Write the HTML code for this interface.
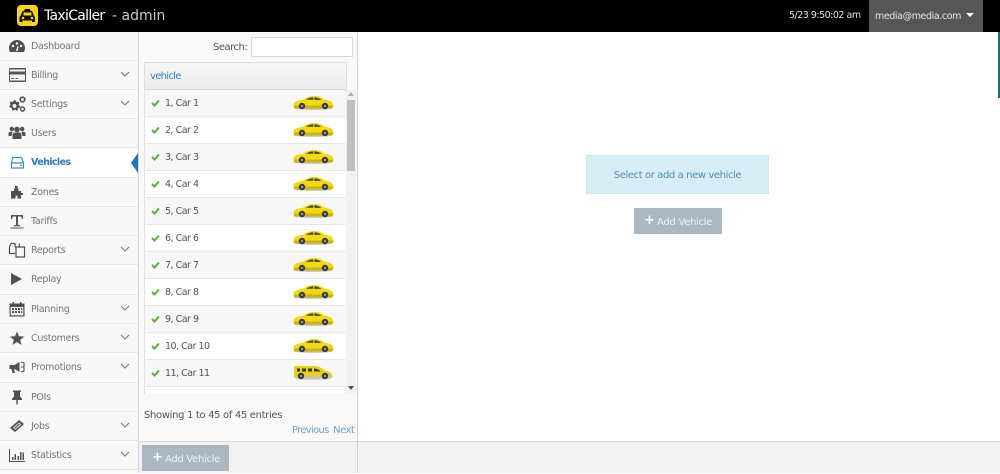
<!DOCTYPE html>
<html><head><meta charset="utf-8"><style>
html,body{margin:0;padding:0}
body{width:1000px;height:473px;overflow:hidden;background:#fff;position:relative;font-family:"DejaVu Sans",sans-serif;font-size:10px;color:#555;letter-spacing:-.3px}
.a{position:absolute;white-space:nowrap}
#top{left:0;top:0;width:1000px;height:32px;background:#000}
#side{left:0;top:32px;width:138px;height:441px;background:#f8f8f8;border-right:1px solid #d4d4d4}
.m{position:absolute;left:0;width:138px;height:28px;border-bottom:1px solid #e6e6e6}
.m span{position:absolute;left:31px;top:8px;line-height:14px;font-size:9.5px;letter-spacing:-.3px;color:#757575}
.m svg.i{position:absolute;left:8px;top:5px;width:18px;height:18px;fill:#505050}
.m svg.c{position:absolute;left:120px;top:10px;width:10px;height:7px;fill:none;stroke:#777;stroke-width:1}
.act{background:#fff}
.act span{color:#2a7ab8;font-weight:bold;letter-spacing:-.6px}
#panel{left:139px;top:32px;width:218px;height:409px;background:#f9f9f9;border-right:1px solid #d4d4d4}
.r{position:absolute;left:145px;width:200px;height:26px;border-bottom:1px solid #e4e4e4;background:#fff}
.r.o{background:#f7f7f7}
.r svg.k{position:absolute;left:6px;top:9px;width:9px;height:8px;fill:none;stroke:#5cb034;stroke-width:2}
.r span{position:absolute;left:20px;top:7px;line-height:14px;font-size:9.5px;letter-spacing:-.5px;color:#555}
.r svg.v{position:absolute;left:148px;top:4px;width:41px;height:16px}
.btn{background:#abb8c2}
.btn i{position:absolute;left:10px;top:0;font-style:normal;color:#fff;font-weight:bold;font-size:13px;line-height:26px}
.btn span{position:absolute;left:23px;top:0;color:#eef1f3;font-size:10px;line-height:29px;letter-spacing:-.3px;white-space:nowrap}
</style></head><body>
<div id="top" class="a"></div>
<svg class="a" style="left:17px;top:5px" width="21" height="21" viewBox="0 0 21 21"><rect width="21" height="21" rx="4" fill="#f7d417"/><path d="M8 4h5l.5 2h1.500l2 5 1 1v5h-3v-1.500H5.500V17h-3v-5l1-1 2-5h1.500z" fill="#111"/><rect x="6.500" y="7.500" width="8" height="3" fill="#f7d417"/><circle cx="6" cy="13" r="1.300" fill="#f7d417"/><circle cx="15" cy="13" r="1.300" fill="#f7d417"/></svg>
<div class="a" style="left:44px;top:6px;line-height:20px;font-size:14px;color:#fff;letter-spacing:-.7px">TaxiCaller</div>
<div class="a" style="left:112px;top:6px;line-height:20px;font-size:14px;color:#c9c9c9;letter-spacing:0">- admin</div>
<div class="a" style="left:789px;top:9px;line-height:14px;font-size:9.5px;color:#e2e2e2;letter-spacing:-.5px">5/23 9:50:02 am</div>
<div class="a" style="left:869px;top:0;width:114px;height:32px;background:#565656"></div>
<div class="a" style="left:875px;top:10px;line-height:14px;font-size:9.5px;color:#e6e6e6;letter-spacing:-.4px">media@media.com</div>
<div class="a" style="left:966px;top:13px;width:0;height:0;border-left:4px solid transparent;border-right:4px solid transparent;border-top:4px solid #fff"></div>
<div class="a" style="left:998px;top:32px;width:2px;height:66px;background:#1f6f6a"></div>

<div id="side" class="a">
<div class="m" style="top:0"><svg class="i" viewBox="0 0 18 18"><path d="M9 3a8 8 0 0 0-8 8c0 1.500.4 3 1 4h14c.6-1 1-2.500 1-4a8 8 0 0 0-8-8z"/><circle cx="5" cy="9" r="1.200" fill="#f8f8f8"/><circle cx="9" cy="6.500" r="1.200" fill="#f8f8f8"/><circle cx="13" cy="9" r="1.200" fill="#f8f8f8"/><path d="M8 14l1.500-5 1 .4L9.700 14z" fill="#f8f8f8"/></svg><span>Dashboard</span></div>
<div class="m" style="top:29px"><svg class="i" viewBox="0 0 18 18"><path fill-rule="evenodd" d="M2 2h15a1 1 0 0 1 1 1v12a1 1 0 0 1-1 1H2a1 1 0 0 1-1-1V3a1 1 0 0 1 1-1zm0 1.500V5.500h15V3.500zM2 8.500v6h15v-6zM3 12h3v1H3zm4.500 0H10v1H7.500z" fill="#555"/></svg><span>Billing</span><svg class="c" viewBox="0 0 10 7"><path d="M1 1l4 4 4-4"/></svg></div>
<div class="m" style="top:58px"><svg class="i" viewBox="0 0 18 18"><path fill-rule="evenodd" d="M6.500 5l1 .2.5 1.300 1.300.6 1.200-.5 1 1.300-.8 1.100.3 1.400 1.200.6-.3 1.600-1.400.1-.8 1.100.3 1.300-1.500.6-.9-1-1.400 0-.9 1-1.500-.6.300-1.300-.8-1.100-1.400-.1L1 10.900l1.200-.6.300-1.400-.8-1.100 1-1.300 1.200.5 1.300-.6zm0 4a2 2 0 1 0 .01 0z"/><circle cx="14.500" cy="4.500" r="2.300" fill="none" stroke="#505050" stroke-width="1.600"/><circle cx="14.500" cy="14" r="2" fill="none" stroke="#505050" stroke-width="1.500"/></svg><span>Settings</span><svg class="c" viewBox="0 0 10 7"><path d="M1 1l4 4 4-4"/></svg></div>
<div class="m" style="top:87px"><svg class="i" viewBox="0 0 18 18"><circle cx="9" cy="5.500" r="2.800"/><circle cx="3.800" cy="5" r="2.200"/><circle cx="14.200" cy="5" r="2.200"/><path d="M4.500 15v-4a2.500 2.500 0 0 1 2.500-2.500h4A2.500 2.500 0 0 1 13.500 11v4z"/><path d="M.5 12V9.500A2 2 0 0 1 2.500 7.700h2L3.500 12zM17.500 12V9.500a2 2 0 0 0-2-1.800h-2l1 4.300z"/></svg><span>Users</span></div>
<div class="m act" style="top:116px;height:29px"><svg class="i" viewBox="0 0 18 18"><path d="M4.500 4.500h9l2 5.500v5h-12v-5zM3.500 10h12M12 12.500h2" fill="none" stroke="#3d8bc7" stroke-width="1.200"/></svg><span>Vehicles</span></div>
<div class="a" style="left:131px;top:121px;width:0;height:0;border-top:10px solid transparent;border-bottom:10px solid transparent;border-right:7px solid #1f77b8"></div>
<div class="m" style="top:146px"><svg class="i" viewBox="0 0 18 18"><path d="M3 8h3V6.500a1.800 1.800 0 0 1 1-1.500V3h2.500v2a1.800 1.800 0 0 1 1 1.500V8H13v2h1.500a1.100 1.100 0 0 1 0 2H13v3.500H9.500V13.500a1 1 0 0 0-2 0V15.500H3z"/></svg><span>Zones</span></div>
<div class="m" style="top:175px"><svg class="i" viewBox="0 0 18 18"><path d="M3 3h12v4h-1l-1-2.500H10v8.500H12v1.200H6V13h2V4.500H5L4 7H3zM2.500 15.500h13v1h-13z" fill="#555"/></svg><span>Tariffs</span></div>
<div class="m" style="top:204px"><svg class="i" viewBox="0 0 18 18"><path d="M7 6V2.500H3L1.500 6v6.500H7M7 6h4l.5-3.500M10.500 6H16.500V16H8V6z" fill="none" stroke="#505050" stroke-width="1.200"/></svg><span>Reports</span><svg class="c" viewBox="0 0 10 7"><path d="M1 1l4 4 4-4"/></svg></div>
<div class="m" style="top:233px;height:29px"><svg class="i" viewBox="0 0 18 18"><path d="M3 3l11 6-11 6z"/></svg><span>Replay</span></div>
<div class="m" style="top:263px"><svg class="i" viewBox="0 0 18 18"><path fill-rule="evenodd" d="M1.500 3.500h3V2h1.500v1.500h6V2h1.500v1.500h3V16.500h-15zM2.700 7v8.300h12.600V7zM4 8h2v2H4zm3 0h2v2H7zm3 0h2v2h-2zm3 0h1.300v2H13zM4 11h2v2H4zm3 0h2v2H7zm3 0h2v2h-2zm3 0h1.300v2H13z"/></svg><span>Planning</span><svg class="c" viewBox="0 0 10 7"><path d="M1 1l4 4 4-4"/></svg></div>
<div class="m" style="top:292px"><svg class="i" viewBox="0 0 18 18"><path d="M9 2.500l2 4.700 5.200.4-4 3.400 1.300 5L9 13l-4.500 2.900 1.300-5-4-3.400L7 7.200z"/></svg><span>Customers</span><svg class="c" viewBox="0 0 10 7"><path d="M1 1l4 4 4-4"/></svg></div>
<div class="m" style="top:321px;height:29px"><svg class="i" viewBox="0 0 18 18"><path d="M1.500 7h5l5-3v10l-5-3H6l1 4H4.500l-1-4h-2z"/><path d="M13 4l3 1v8l-3 1M13 9h3" fill="none" stroke="#505050" stroke-width="1.100"/></svg><span>Promotions</span><svg class="c" viewBox="0 0 10 7"><path d="M1 1l4 4 4-4"/></svg></div>
<div class="m" style="top:351px"><svg class="i" viewBox="0 0 18 18"><path d="M5 2.500h8v1.500h-1v4.500l2 2V12H9.700v4.500H8.300V12H4v-1.500l2-2V4H5z"/></svg><span>POIs</span></div>
<div class="m" style="top:380px"><svg class="i" viewBox="0 0 18 18"><path fill-rule="evenodd" d="M2 11L11 3l5 4-9 8zM5 10.800l2.200 2 6-5.300-2.200-2z"/><path d="M6 11l5-4.500 1 .8-5 4.500z"/></svg><span>Jobs</span><svg class="c" viewBox="0 0 10 7"><path d="M1 1l4 4 4-4"/></svg></div>
<div class="m" style="top:409px"><svg class="i" viewBox="0 0 18 18"><path d="M1 3h1v12h15v1H1zM4 11h1.500v3H4zM6.500 8h1.500v6H6.500zM9.500 10h1.500v4H9.500zM12 6h1.500v8H12zM14.500 6.500H16V14h-1.500z"/></svg><span>Statistics</span><svg class="c" viewBox="0 0 10 7"><path d="M1 1l4 4 4-4"/></svg></div>
</div>

<div id="panel" class="a"></div>
<div class="a" style="left:213px;top:41px;line-height:14px;font-size:10px;color:#555;letter-spacing:-.5px">Search:</div>
<div class="a" style="left:251px;top:37px;width:100px;height:18px;background:#fff;border:1px solid #d8d8d8"></div>
<div class="a" style="left:144px;top:62px;width:201px;height:26px;background:linear-gradient(#f6f6f6,#ececec);border:1px solid #ddd;border-bottom:2px solid #d8d8d8"></div>
<div class="a" style="left:150px;top:70px;line-height:14px;font-size:10px;color:#2f7fd0;letter-spacing:-.7px">vehicle</div>
<div class="a" style="left:144px;top:90px;width:1px;height:304px;background:#e2e2e2"></div>

<svg width="0" height="0" style="position:absolute"><defs>
<g id="car"><ellipse cx="20" cy="14.300" rx="19.500" ry="1.400" fill="#bbb"/><path d="M.5 10c.5-2.500 5-3.500 9.500-4.200C13 3.500 16 2 21 2c5 0 8 1.500 11.500 4 3.500.3 7 1.500 7.500 4l.5 2-1 2.300H1z" fill="#f2da10"/><path d="M.8 11.500h39.500v1.300c-.3.8-1 1.400-2 1.400H2c-1 0-1.500-.8-1.200-2.700z" fill="#cdb20a"/><path d="M13 5.800c2-1.600 4.500-2.400 7.300-2.400v2.400zM21.300 3.400c2.800 0 5 .9 7 2.500h-7z" fill="#444"/><circle cx="9" cy="12" r="3.200" fill="#3a3a3a"/><circle cx="9" cy="12" r="1.200" fill="#999"/><circle cx="32" cy="12" r="3.200" fill="#3a3a3a"/><circle cx="32" cy="12" r="1.200" fill="#999"/></g>
<g id="van"><ellipse cx="20" cy="14.500" rx="18" ry="1.300" fill="#ccc"/><path d="M1 2h21c4 0 8 3 11 5 4 .5 6 2 6.500 5l-.5 2H1z" fill="#ead20e"/><path d="M2 11.500h37l.5 1-.5 1.500H2z" fill="#cfc88c"/><path d="M4 4.500h3v3H4zM9 4.500h4v3H9zM15 4.500h4v3h-4zM21 4.500c3 0 5 1.500 7 3h-7z" fill="#333"/><circle cx="8" cy="12" r="3.200" fill="#333"/><circle cx="8" cy="12" r="1.300" fill="#999"/><circle cx="32" cy="12" r="3.200" fill="#333"/><circle cx="32" cy="12" r="1.300" fill="#999"/></g>
<path id="chk" d="M1 4l2.500 2.500L8 1.500"/>
</defs></svg>

<div class="r o" style="top:90px"><svg class="k" viewBox="0 0 9 8"><use href="#chk"/></svg><span>1, Car 1</span><svg class="v" viewBox="0 0 41 16"><use href="#car"/></svg></div>
<div class="r" style="top:117px"><svg class="k" viewBox="0 0 9 8"><use href="#chk"/></svg><span>2, Car 2</span><svg class="v" viewBox="0 0 41 16"><use href="#car"/></svg></div>
<div class="r o" style="top:144px"><svg class="k" viewBox="0 0 9 8"><use href="#chk"/></svg><span>3, Car 3</span><svg class="v" viewBox="0 0 41 16"><use href="#car"/></svg></div>
<div class="r" style="top:171px"><svg class="k" viewBox="0 0 9 8"><use href="#chk"/></svg><span>4, Car 4</span><svg class="v" viewBox="0 0 41 16"><use href="#car"/></svg></div>
<div class="r o" style="top:198px"><svg class="k" viewBox="0 0 9 8"><use href="#chk"/></svg><span>5, Car 5</span><svg class="v" viewBox="0 0 41 16"><use href="#car"/></svg></div>
<div class="r" style="top:225px"><svg class="k" viewBox="0 0 9 8"><use href="#chk"/></svg><span>6, Car 6</span><svg class="v" viewBox="0 0 41 16"><use href="#car"/></svg></div>
<div class="r o" style="top:252px"><svg class="k" viewBox="0 0 9 8"><use href="#chk"/></svg><span>7, Car 7</span><svg class="v" viewBox="0 0 41 16"><use href="#car"/></svg></div>
<div class="r" style="top:279px"><svg class="k" viewBox="0 0 9 8"><use href="#chk"/></svg><span>8, Car 8</span><svg class="v" viewBox="0 0 41 16"><use href="#car"/></svg></div>
<div class="r o" style="top:306px"><svg class="k" viewBox="0 0 9 8"><use href="#chk"/></svg><span>9, Car 9</span><svg class="v" viewBox="0 0 41 16"><use href="#car"/></svg></div>
<div class="r" style="top:333px"><svg class="k" viewBox="0 0 9 8"><use href="#chk"/></svg><span>10, Car 10</span><svg class="v" viewBox="0 0 41 16"><use href="#car"/></svg></div>
<div class="r o" style="top:360px"><svg class="k" viewBox="0 0 9 8"><use href="#chk"/></svg><span>11, Car 11</span><svg class="v" viewBox="0 0 41 16"><use href="#van"/></svg></div>
<div class="r" style="top:387px;height:6px;border:0;overflow:hidden"><svg class="v" viewBox="0 0 41 16" style="top:5px"><use href="#car"/></svg></div>

<div class="a" style="left:346px;top:90px;width:10px;height:303px;background:#f1f1f1"></div>
<div class="a" style="left:348px;top:92px;width:0;height:0;border-left:3px solid transparent;border-right:3px solid transparent;border-bottom:4px solid #b0b0b0"></div>
<div class="a" style="left:347px;top:100px;width:8px;height:71px;background:#c1c1c1"></div>
<div class="a" style="left:348px;top:386px;width:0;height:0;border-left:3px solid transparent;border-right:3px solid transparent;border-top:4px solid #505050"></div>

<div class="a" style="left:144px;top:409px;line-height:14px;font-size:10px;color:#555;letter-spacing:-.33px">Showing 1 to 45 of 45 entries</div>
<div class="a" style="left:292px;top:424px;line-height:14px;font-size:10px;color:#6aa3d8;letter-spacing:-.7px">Previous</div>
<div class="a" style="left:333px;top:424px;line-height:14px;font-size:10px;color:#6aa3d8;letter-spacing:-.5px">Next</div>

<div class="a" style="left:139px;top:441px;width:861px;height:32px;background:#f2f2f2;border-top:1px solid #d8d8d8;box-sizing:border-box"></div>
<div class="a" style="left:357px;top:441px;width:1px;height:32px;background:#d4d4d4"></div>
<div class="a btn" style="left:142px;top:445px;width:87px;height:26px"><i>+</i><span>Add Vehicle</span></div>

<div class="a" style="left:586px;top:155px;width:183px;height:39px;box-sizing:border-box;background:#d9edf7;border:1px solid #c8e8f3;color:#4d8fb5;font-size:10px;line-height:39px;text-align:center;letter-spacing:-.4px">Select or add a new vehicle</div>
<div class="a btn" style="left:634px;top:208px;width:88px;height:26px"><i>+</i><span>Add Vehicle</span></div>
</body></html>
